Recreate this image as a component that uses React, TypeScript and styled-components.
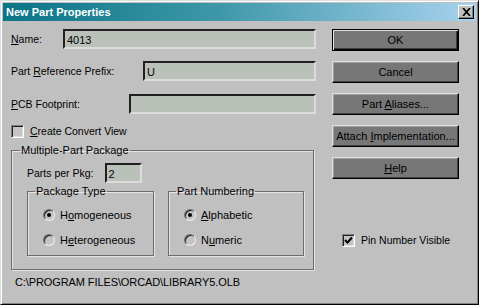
import styled, { createGlobalStyle } from 'styled-components'

const GlobalStyle = createGlobalStyle`
  body {
    margin: 0;
    background: #c0c0c0;
    font-family: "Liberation Sans", Arial, sans-serif;
    font-size: 10.5px;
    color: #000;
  }
`

const Window = styled.div`
  width: 479px;
  height: 305px;
  box-sizing: border-box;
  background: #c0c0c0;
  border: 1px solid;
  border-color: #dfdfdf #000 #000 #dfdfdf;
  box-shadow: inset 1px 1px 0 #fff, inset -1px -1px 0 #808080;
  padding: 2px;
  display: flex;
  flex-direction: column;
`

const TitleBar = styled.div`
  height: 18px;
  flex: none;
  display: flex;
  align-items: center;
  justify-content: space-between;
  padding: 0 2px 0 3px;
  background: linear-gradient(to right, #0b7486 0%, #3d97a8 45%, #a8d2ee 100%);
  color: #fff;
  font-weight: bold;
  font-size: 11px;
`

const CloseButton = styled.div`
  width: 16px;
  height: 14px;
  box-sizing: border-box;
  background: #c0c0c0;
  border: 1px solid;
  border-color: #fff #000 #000 #fff;
  box-shadow: inset -1px -1px 0 #808080;
  display: flex;
  align-items: center;
  justify-content: center;
`

const Body = styled.div`
  flex: 1;
  display: flex;
  padding: 8px 0 0 8px;
`

const LeftColumn = styled.div`
  width: 305px;
  display: flex;
  flex-direction: column;
`

const RightColumn = styled.div`
  width: 127px;
  margin-left: 16px;
  display: flex;
  flex-direction: column;
  gap: 10px;
`

const FieldRow = styled.div<{ $mt?: number }>`
  display: flex;
  align-items: center;
  justify-content: space-between;
  height: 20px;
  margin-top: ${p => p.$mt ?? 0}px;
`

const Label = styled.span`
  white-space: nowrap;
`

const Field = styled.div<{ $width: number }>`
  width: ${p => p.$width}px;
  height: 20px;
  box-sizing: border-box;
  background: #b9c1b9;
  border: 2px solid;
  border-color: #202020 #dcdcdc #dcdcdc #202020;
  padding: 1px 2px 0;
  display: flex;
  align-items: center;
  font-size: 11px;
`

const CheckRow = styled.label<{ $mt?: number }>`
  display: flex;
  align-items: center;
  gap: 6px;
  height: 14px;
  margin-top: ${p => p.$mt ?? 0}px;
`

const CheckBox = styled.span`
  width: 13px;
  height: 13px;
  box-sizing: border-box;
  background: #c4c4c4;
  border: 1px solid;
  border-color: #808080 #fff #fff #808080;
  box-shadow: inset 1px 1px 0 #202020, inset -1px -1px 0 #dcdcdc;
  display: flex;
  align-items: center;
  justify-content: center;
`

const Group = styled.fieldset<{ $width: number; $pad: string }>`
  width: ${p => p.$width}px;
  box-sizing: border-box;
  margin: 0;
  padding: ${p => p.$pad};
  border: 1px solid #6c6c6c;
  box-shadow: 1px 1px 0 #e4e4e4, inset 1px 1px 0 #e4e4e4;
  min-width: 0;
`

const Legend = styled.legend<{ $offset: number }>`
  padding: 0 1px;
  margin-left: ${p => p.$offset}px;
  font-size: 11px;
  line-height: 13px;
`

const PartsRow = styled.div`
  display: flex;
  align-items: center;
  gap: 11px;
  height: 20px;
  margin-top: 6px;
`

const SubGroups = styled.div`
  display: flex;
  gap: 14px;
  margin-top: 2px;
`

const RadioList = styled.div`
  display: flex;
  flex-direction: column;
  gap: 11px;
`

const RadioRow = styled.label`
  display: flex;
  align-items: center;
  gap: 5px;
  height: 14px;
  font-size: 11px;
`

const Radio = styled.span<{ $checked?: boolean }>`
  width: 12px;
  height: 12px;
  box-sizing: border-box;
  border-radius: 50%;
  background: #c4c4c4;
  border: 1px solid;
  border-color: #707070 #f0f0f0 #f0f0f0 #707070;
  box-shadow: inset 1px 1px 0 #202020;
  display: flex;
  align-items: center;
  justify-content: center;

  &::after {
    content: '';
    width: 4px;
    height: 4px;
    border-radius: 50%;
    background: #000;
    display: ${p => (p.$checked ? 'block' : 'none')};
  }
`

const PathText = styled.div`
  margin: 6px 0 0 4px;
  font-size: 11px;
  letter-spacing: -0.1px;
`

const Button = styled.div<{ $default?: boolean }>`
  height: 22px;
  box-sizing: border-box;
  background: #777;
  border: 1px solid;
  border-color: ${p => (p.$default ? '#000' : '#e0e0e0 #000 #000 #e0e0e0')};
  box-shadow: ${p =>
    p.$default
      ? 'inset 1px 1px 0 #e0e0e0, inset -1px -1px 0 #000, inset -2px -2px 0 #404040'
      : 'inset -1px -1px 0 #404040, inset 1px 1px 0 #a0a0a0'};
  display: flex;
  align-items: center;
  justify-content: center;
  font-size: 11px;
  white-space: nowrap;
`

const PinRow = styled(CheckRow)`
  margin: 44px 0 0 10px;
`

function Check() {
  return (
    <svg width="9" height="9" viewBox="0 0 9 9">
      <path d="M1 4 L3.5 6.5 L8 1.5" stroke="#000" strokeWidth="2" fill="none" />
    </svg>
  )
}

function App() {
  return (
    <>
      <GlobalStyle />
      <Window>
        <TitleBar>
          <span>New Part Properties</span>
          <CloseButton>
            <svg width="9" height="8" viewBox="0 0 9 8">
              <path d="M1 0 L8 8 M8 0 L1 8" stroke="#000" strokeWidth="1.8" />
            </svg>
          </CloseButton>
        </TitleBar>
        <Body>
          <LeftColumn>
            <FieldRow>
              <Label><u>N</u>ame:</Label>
              <Field $width={253}>4013</Field>
            </FieldRow>
            <FieldRow $mt={12}>
              <Label>Part <u>R</u>eference Prefix:</Label>
              <Field $width={173}>U</Field>
            </FieldRow>
            <FieldRow $mt={13}>
              <Label><u>P</u>CB Footprint:</Label>
              <Field $width={187} />
            </FieldRow>
            <CheckRow $mt={10}>
              <CheckBox />
              <span><u>C</u>reate Convert View</span>
            </CheckRow>
            <Group $width={303} $pad="0 9px 13px 15px" style={{ marginTop: 6 }}>
              <Legend $offset={-7}>Multiple-Part Package</Legend>
              <PartsRow>
                <Label>Parts per Pkg:</Label>
                <Field $width={37}>2</Field>
              </PartsRow>
              <SubGroups>
                <Group $width={127} $pad="10px 0 8px 15px">
                  <Legend $offset={-8}>Package Type</Legend>
                  <RadioList>
                    <RadioRow><Radio $checked /><span>H<u>o</u>mogeneous</span></RadioRow>
                    <RadioRow><Radio /><span>H<u>e</u>terogeneous</span></RadioRow>
                  </RadioList>
                </Group>
                <Group $width={136} $pad="10px 0 8px 15px">
                  <Legend $offset={-8}>Part Numbering</Legend>
                  <RadioList>
                    <RadioRow><Radio $checked /><span><u>A</u>lphabetic</span></RadioRow>
                    <RadioRow><Radio /><span>N<u>u</u>meric</span></RadioRow>
                  </RadioList>
                </Group>
              </SubGroups>
            </Group>
            <PathText>C:\PROGRAM FILES\ORCAD\LIBRARY5.OLB</PathText>
          </LeftColumn>
          <RightColumn>
            <Button $default><span>OK</span></Button>
            <Button><span>Cancel</span></Button>
            <Button><span>Part <u>A</u>liases...</span></Button>
            <Button><span>Attach <u>I</u>mplementation...</span></Button>
            <Button><span><u>H</u>elp</span></Button>
            <PinRow>
              <CheckBox><Check /></CheckBox>
              <span>Pin Number Visible</span>
            </PinRow>
          </RightColumn>
        </Body>
      </Window>
    </>
  )
}

export default App
